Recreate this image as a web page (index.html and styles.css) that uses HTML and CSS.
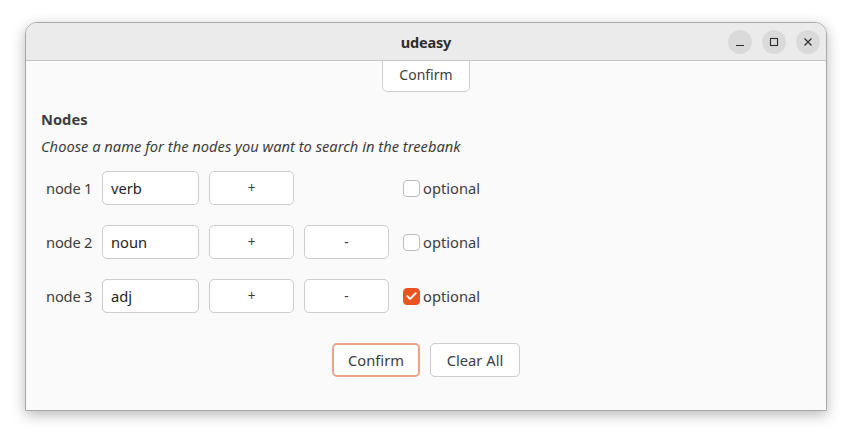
FILE: index.html
```html
<!DOCTYPE html>
<html>
<head>
<meta charset="utf-8">
<link rel="stylesheet" href="styles.css">
</head>
<body>
<div class="window">
  <div class="titlebar">
    <div class="title">udeasy</div>
    <div class="controls">
      <div class="ctl"><svg width="10" height="10" viewBox="0 0 10 10"><path d="M1 8.5h8" stroke="#2e2e2e" stroke-width="1.2"/></svg></div>
      <div class="ctl"><svg width="10" height="10" viewBox="0 0 10 10"><rect x="1.5" y="1.5" width="7" height="7" fill="none" stroke="#2e2e2e" stroke-width="1.1"/></svg></div>
      <div class="ctl"><svg width="10" height="10" viewBox="0 0 10 10"><path d="M1.5 1.5l7 7M8.5 1.5l-7 7" stroke="#2e2e2e" stroke-width="1.2"/></svg></div>
    </div>
  </div>
  <div class="content">
    <div class="topbar"><button class="btn top">Confirm</button></div>
    <div class="section">
      <div class="heading">Nodes</div>
      <div class="sub">Choose a name for the nodes you want to search in the treebank</div>
      <div class="grid">
        <div class="lbl">node 1</div>
        <div class="entry">verb</div>
        <button class="btn small">+</button>
        <div></div>
        <label class="opt"><span class="cb"></span>optional</label>

        <div class="lbl">node 2</div>
        <div class="entry">noun</div>
        <button class="btn small">+</button>
        <button class="btn small">-</button>
        <label class="opt"><span class="cb"></span>optional</label>

        <div class="lbl">node 3</div>
        <div class="entry">adj</div>
        <button class="btn small">+</button>
        <button class="btn small">-</button>
        <label class="opt"><span class="cb on"><svg width="16" height="16" viewBox="0 0 16 16"><path d="M3.5 8.2l3 3 6-6.2" fill="none" stroke="#fff" stroke-width="2" stroke-linecap="round" stroke-linejoin="round"/></svg></span>optional</label>
      </div>
    </div>
    <div class="actions">
      <button class="btn focus">Confirm</button>
      <button class="btn">Clear All</button>
    </div>
  </div>
</div>
</body>
</html>
```

FILE: styles.css
```css
* { box-sizing: border-box; }
html, body { margin: 0; padding: 0; background: #ffffff; }
body {
  width: 852px;
  height: 439px;
  padding: 22px 0 0 25px;
  font-family: "Noto Sans", "Open Sans", sans-serif;
  color: #3d3d3d;
  font-size: 14.7px;
}
.window {
  width: 802px;
  height: 389px;
  border: 1px solid #a8a8a8;
  border-radius: 12px 12px 0 0;
  background: #fafafa;
  box-shadow: 0 4px 14px rgba(0,0,0,0.28);
  overflow: hidden;
  display: flex;
  flex-direction: column;
}
.titlebar {
  height: 38px;
  flex: none;
  background: #ebebeb;
  border-bottom: 1px solid #c4c4c4;
  position: relative;
  display: flex;
  align-items: center;
  justify-content: center;
}
.title {
  font-weight: bold;
  font-size: 14.5px;
  color: #2e2e2e;
  letter-spacing: -0.2px;
}
.controls {
  position: absolute;
  right: 6px;
  top: 7px;
  display: flex;
  gap: 10px;
}
.ctl {
  width: 24px;
  height: 24px;
  border-radius: 50%;
  background: #dadada;
  display: flex;
  align-items: center;
  justify-content: center;
}
.content {
  flex: 1;
  display: flex;
  flex-direction: column;
}
.topbar {
  display: flex;
  justify-content: center;
  margin-top: -2px;
}
.btn {
  font-family: inherit;
  font-size: 14px;
  color: #3d3d3d;
  background: #ffffff;
  border: 1px solid #cdcdcd;
  border-radius: 5px;
  height: 34px;
  padding: 0;
  display: flex;
  align-items: center;
  justify-content: center;
  white-space: nowrap;
}
.btn.top { width: 88px; height: 33px; border-radius: 0 0 5px 5px; padding-bottom: 2px; }
.section {
  padding: 17px 0 0 15px;
}
.heading {
  font-weight: bold;
  line-height: 20px;
}
.sub {
  font-style: italic;
  line-height: 20px;
  margin-top: 7px;
}
.grid {
  margin-top: 15px;
  display: grid;
  grid-template-columns: 51px 97px 85px 85px auto;
  grid-auto-rows: 34px;
  column-gap: 10px;
  row-gap: 20px;
  align-items: center;
}
.lbl { padding-left: 5px; white-space: nowrap; letter-spacing: -0.2px; }
.entry {
  height: 34px;
  background: #fff;
  border: 1px solid #cdcdcd;
  border-radius: 5px;
  padding: 0 0 0 8px;
  display: flex;
  align-items: center;
  color: #1e1e1e;
}
.grid .btn { width: 85px; height: 34px; font-size: 13.5px; }
.opt {
  display: flex;
  align-items: center;
  gap: 3px;
  padding-left: 4px;
  white-space: nowrap;
}
.cb {
  width: 17px;
  height: 17px;
  border: 1px solid #bcbcbc;
  border-radius: 4px;
  background: #fff;
  display: flex;
  align-items: center;
  justify-content: center;
}
.cb.on { background: #e95420; border-color: #e95420; }
.actions {
  display: flex;
  justify-content: center;
  gap: 10px;
  margin-top: 30px;
}
.actions .btn { width: 88px; font-size: 14.7px; }
.actions .btn:last-child { width: 90px; }
.btn.focus { border: 2px solid #eea488; }
```
